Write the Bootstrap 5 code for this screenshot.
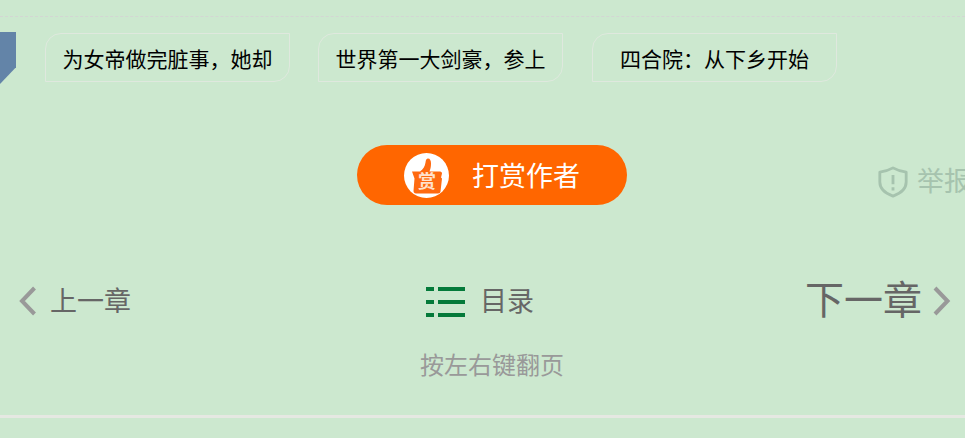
<!DOCTYPE html>
<html lang="zh-CN">
<head>
    <meta charset="UTF-8">
    <meta name="viewport" content="width=device-width, initial-scale=1.0">
    <title>章节页</title>
    <link href="https://cdn.jsdelivr.net/npm/bootstrap@5.3.0/dist/css/bootstrap.min.css" rel="stylesheet">
    <style>
        body {
            background: #cce8cf;
            font-family: "Liberation Sans", "Noto Sans CJK SC", sans-serif;
            height: 438px;
            overflow: hidden;
        }
        .top-dash {
            margin-top: 16px;
            border-top: 1px dashed #d3d6d3;
        }
        .rec-row {
            margin-top: 16px;
            height: 49px;
        }
        .rec-ribbon {
            width: 16px;
            height: 52px;
            margin-top: -1px;
            margin-right: 29px;
            background: #6384a8;
            clip-path: polygon(0 0, 100% 0, 100% 68%, 0 100%);
        }
        .rec-item {
            width: 245px;
            height: 49px;
            border: 1px solid #dfe8de;
            border-radius: 16px 0 16px 0;
            font-size: 21px;
            line-height: 51px;
            color: #000;
            text-decoration: none;
            text-align: center;
            white-space: nowrap;
        }
        .rec-gap-a {
            margin-right: 28px;
        }
        .rec-gap-b {
            margin-right: 29px;
        }
        .reward-row {
            margin-top: 63px;
            height: 60px;
        }
        .reward-btn {
            width: 270px;
            height: 60px;
            margin-left: 357px;
            padding-left: 47px;
            border-radius: 30px;
            background: #ff6600;
            color: #fff;
            font-size: 27px;
            text-decoration: none;
        }
        .reward-text {
            padding-top: 4px;
        }
        .reward-icon {
            width: 45px;
            height: 45px;
            margin-right: 23px;
        }
        .report-link {
            margin-left: 250px;
            margin-top: 14px;
            color: #a6c3ae;
            font-size: 27px;
            white-space: nowrap;
            text-decoration: none;
        }
        .page-row {
            margin-top: 62px;
            height: 68px;
            padding-left: 18px;
        }
        .page-link-item {
            color: #666;
            text-decoration: none;
            white-space: nowrap;
        }
        .page-label {
            padding-top: 2px;
        }
        .prev-item {
            width: 408px;
            font-size: 27px;
        }
        .toc-item {
            width: 380px;
            font-size: 27px;
        }
        .toc-svg {
            margin-right: 14px;
            margin-top: 1px;
        }
        .next-item {
            font-size: 39px;
            margin-left: -1px;
        }
        .next-arrow {
            margin-left: 10px;
        }
        .hint-text {
            margin-left: 420px;
            margin-top: 16px;
            color: #999;
            font-size: 24px;
            line-height: 30px;
        }
        .bottom-rule {
            margin-top: 34px;
            border-top: 3px solid #e5e8e2;
        }
    </style>
</head>
<body>
    <div class="top-dash"></div>

    <!-- Recommended books -->
    <div class="rec-row d-flex">
        <div class="rec-ribbon flex-shrink-0"></div>
        <a class="rec-item rec-gap-a flex-shrink-0" href="#">为女帝做完脏事，她却</a>
        <a class="rec-item rec-gap-b flex-shrink-0" href="#">世界第一大剑豪，参上</a>
        <a class="rec-item flex-shrink-0" href="#">四合院：从下乡开始</a>
    </div>

    <!-- Reward and report -->
    <div class="reward-row d-flex align-items-center">
        <a class="reward-btn d-flex align-items-center flex-shrink-0" href="#">
            <svg class="reward-icon flex-shrink-0" viewBox="0 0 45 45">
                <circle cx="22.5" cy="22.5" r="22.5" fill="#fff"/>
                <path d="M8 18.500h8c3-2 5-5 5.500-9 .3-2.500 1-4 2.500-4 2 0 3 2 3 5 0 3-.5 5.500-1.500 8H36c1.500 0 2 1 2 2l-1 4 1 1-1.500 13c-.2 1.200-1 2-2.500 2H12c-1.500 0-2.500-1-2.500-2.500l1-12.500z" fill="#ff6a10"/>
                <text x="23" y="34.500" text-anchor="middle" font-size="18" font-weight="700" fill="#ffe2cc" font-family="Noto Sans CJK SC, sans-serif">赏</text>
            </svg>
            <span class="reward-text">打赏作者</span>
        </a>
        <a class="report-link d-flex align-items-center flex-shrink-0" href="#">
            <svg class="me-2" width="32" height="32" viewBox="0 0 32 34" fill="none" stroke="#a6c3ae" stroke-width="3">
                <path d="M2 6.500C7 6 11.500 4.500 16 2c4.500 2.500 9 4 14 4.500V17c0 7-5.500 12-14 15C7.500 29 2 24 2 17z" stroke-linejoin="round"/>
                <path d="M16 9.500v10M16 22.500v3.500"/>
            </svg>
            举报
        </a>
    </div>

    <!-- Chapter paging -->
    <div class="page-row d-flex align-items-center">
        <a class="page-link-item prev-item d-flex align-items-center flex-shrink-0" href="#">
            <svg class="me-2" width="24" height="32" viewBox="0 0 24 32" fill="none" stroke="#999" stroke-width="4">
                <path d="M16.500 3 4 16l12.500 13"/>
            </svg>
            <span class="page-label">上一章</span>
        </a>
        <a class="page-link-item toc-item d-flex align-items-center flex-shrink-0" href="#">
            <svg class="toc-svg" width="40" height="30" viewBox="0 0 40 30" fill="#047a3a">
                <rect x="0" y="0" width="8" height="4"/><rect x="12" y="0" width="27" height="4"/>
                <rect x="0" y="13" width="8" height="4"/><rect x="12" y="13" width="27" height="4"/>
                <rect x="0" y="26" width="8" height="4"/><rect x="12" y="26" width="27" height="4"/>
            </svg>
            <span class="page-label">目录</span>
        </a>
        <a class="page-link-item next-item d-flex align-items-center flex-shrink-0" href="#">
            下一章
            <svg class="next-arrow" width="20" height="32" viewBox="0 0 20 32" fill="none" stroke="#999" stroke-width="4">
                <path d="M3 3l12.500 13L3 29"/>
            </svg>
        </a>
    </div>
    <p class="hint-text mb-0">按左右键翻页</p>

    <div class="bottom-rule"></div>

    <script src="https://cdn.jsdelivr.net/npm/bootstrap@5.3.0/dist/js/bootstrap.bundle.min.js"></script>
</body>
</html>
